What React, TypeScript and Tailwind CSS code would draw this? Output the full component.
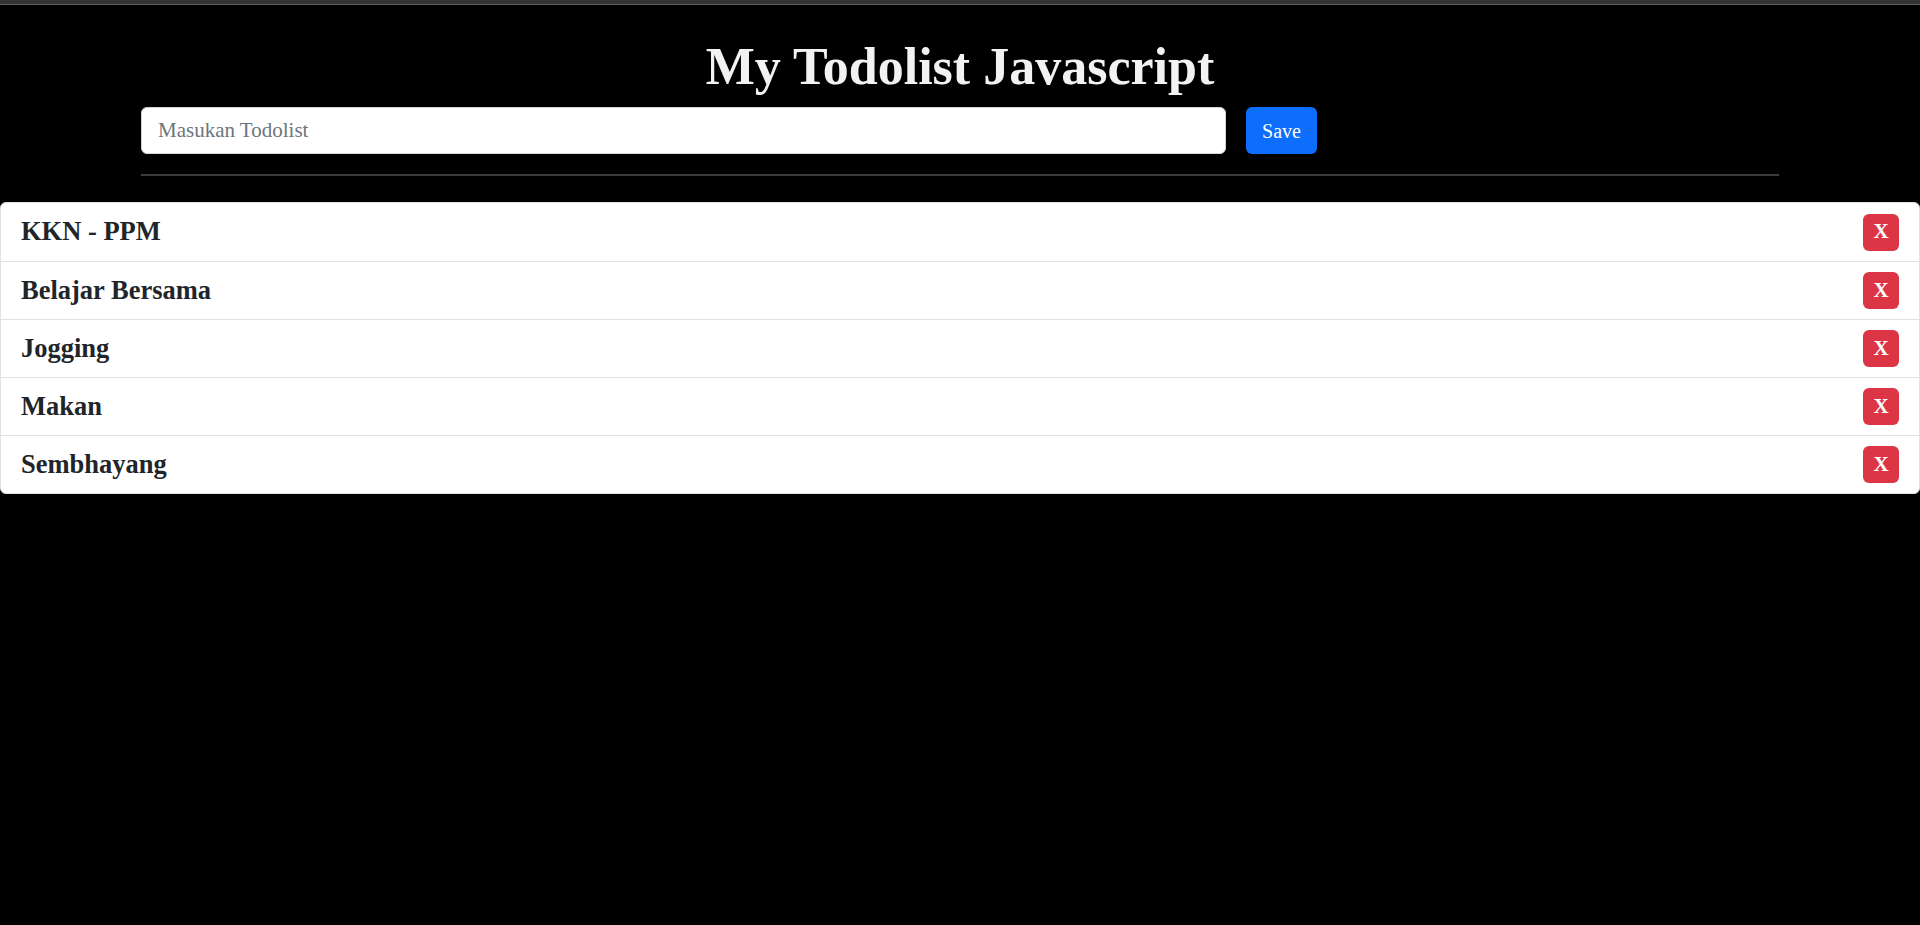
import { useState } from "react";

const initialTodos = ["KKN - PPM", "Belajar Bersama", "Jogging", "Makan", "Sembhayang"];

export default function App() {
  const [todos, setTodos] = useState<string[]>(initialTodos);
  const [value, setValue] = useState("");

  const save = () => {
    if (!value.trim()) return;
    setTodos([...todos, value.trim()]);
    setValue("");
  };

  return (
    <div className="min-h-screen bg-black font-['Liberation_Serif',serif]">
      <div className="h-[5px] bg-[#333] border-b border-[#5c5c5c]" />

      <div className="w-[1638px] mx-auto">
        <h1 className="mt-[32px] mb-[10px] text-center text-[52px] leading-[60px] font-bold text-[#f2f2f2]">
          My Todolist Javascript
        </h1>

        <div className="flex gap-5">
          <input
            value={value}
            onChange={(e) => setValue(e.target.value)}
            placeholder="Masukan Todolist"
            className="w-[1085px] h-[47px] px-4 rounded-md bg-white border border-[#ced4da] text-[21px] text-[#212529] placeholder:text-[#6c757d] outline-none"
          />
          <button
            onClick={save}
            className="w-[71px] h-[47px] rounded-md bg-[#0d6efd] text-white text-[20px]"
          >
            Save
          </button>
        </div>

        <hr className="mt-5 border-0 h-[2px] bg-[#3c3c3c]" />
      </div>

      <ul className="mt-[26px] bg-white rounded-md border border-[#dee2e6]">
        {todos.map((todo, i) => (
          <li
            key={i}
            className="h-[58px] flex items-center justify-between pl-5 pr-5 border-t border-[#dee2e6] first:border-t-0"
          >
            <span className="text-[26.5px] font-bold text-[#212529]">{todo}</span>
            <button
              onClick={() => setTodos(todos.filter((_, j) => j !== i))}
              className="w-9 h-[37px] rounded-md bg-[#dc3545] text-white text-[21px] font-bold"
            >
              X
            </button>
          </li>
        ))}
      </ul>
    </div>
  );
}
